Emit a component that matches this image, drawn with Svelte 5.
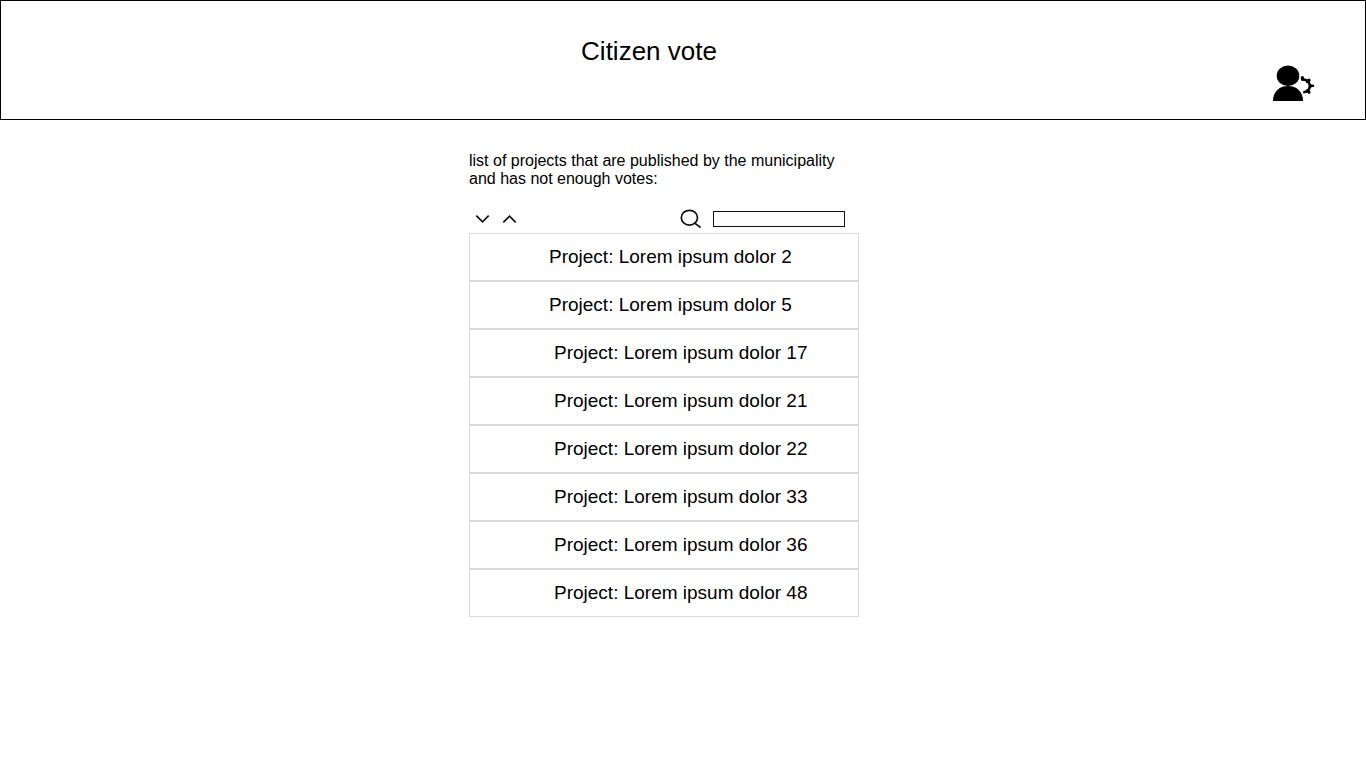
<script>
  const projects = [2, 5, 17, 21, 22, 33, 36, 48];
  let descending = $state(false);
  let query = $state('');

  const shown = $derived(
    projects
      .filter((n) => `project: lorem ipsum dolor ${n}`.includes(query.toLowerCase()))
      .sort((a, b) => (descending ? b - a : a - b))
  );
</script>

<header>
  <h1>Citizen vote</h1>
  <button class="account" aria-label="Account settings">
    <svg width="42" height="36" viewBox="0 0 42 36">
      <ellipse cx="15" cy="10.8" rx="11.3" ry="10.3" />
      <path d="M0 36C0 27 6 21 15 21S30 27 30 36Z" />
      <path d="M28.5 14.4C33.5 14.4 36.8 16.8 36.8 20.8S34 27.2 30.2 27.2" fill="none" stroke="#000" stroke-width="2.6" />
      <path d="M29.4 12.6V14M34.4 16.6L36 15.2M34.4 25.6L36 27.2" fill="none" stroke="#000" stroke-width="3.2" stroke-linecap="round" />
      <path d="M36.5 18.4L38.6 19.4L41.2 19.8V21.8L38.6 22.2L36.5 23.4Z" />
    </svg>
  </button>
</header>

<main>
  <section>
    <p>list of projects that are published by the municipality and has not enough votes:</p>
    <div class="tools">
      <button aria-label="Sort descending" onclick={() => (descending = true)}>
        <svg width="15" height="9" viewBox="0 0 15 9"><path d="M1.3 0.7L7.5 6.8L13.7 0.7" /></svg>
      </button>
      <button aria-label="Sort ascending" onclick={() => (descending = false)}>
        <svg width="15" height="9" viewBox="0 0 15 9"><path d="M1.3 7.3L7.5 1.2L13.7 7.3" /></svg>
      </button>
      <label for="search" aria-label="Search projects">
        <svg width="22" height="20" viewBox="0 0 22 20">
          <ellipse cx="10.4" cy="8.7" rx="8.1" ry="7.4" /><path d="M15.4 13.8L21.6 18.6" />
        </svg>
      </label>
      <input id="search" type="text" bind:value={query} />
    </div>
    <ul>
      {#each shown as n (n)}
        <li class:wide={n > 9}>Project: Lorem ipsum dolor {n}</li>
      {/each}
    </ul>
  </section>
</main>

<style>
  :global(body) {
    background: #fff;
    color: #000;
    font-family: "Liberation Sans", Arial, sans-serif;
  }
  header {
    box-sizing: border-box;
    min-height: 120px;
    border: 1px solid #000;
    display: grid;
    grid-template-columns: 100px 1fr 168px;
    padding-top: 35px;
  }
  h1 {
    grid-column: 2;
    margin: 0;
    text-align: center;
    font-size: 26px;
    line-height: 30px;
    font-weight: 400;
  }
  button {
    padding: 0;
    border: 0;
    background: none;
    display: flex;
    cursor: pointer;
  }
  .account {
    justify-self: end;
    align-self: start;
    margin: 29px 50px 0 0;
  }
  main {
    display: grid;
    grid-template-columns: 469fr 390px 507fr;
    padding-top: 32px;
  }
  section {
    grid-column: 2;
  }
  p {
    margin: 0;
    font-size: 16px;
    line-height: 18px;
  }
  .tools {
    display: flex;
    align-items: center;
    gap: 12px;
    height: 28px;
    padding: 17px 14px 0 6px;
  }
  .tools svg {
    display: block;
    fill: none;
    stroke: #111;
    stroke-width: 1.7;
  }
  label {
    margin-left: auto;
  }
  input {
    box-sizing: border-box;
    width: 132px;
    height: 16px;
    padding: 0 4px;
    border: 1px solid #111;
    background: #fff;
    font: 12px "Liberation Sans", Arial, sans-serif;
  }
  ul {
    margin: 0;
    padding: 0;
    list-style: none;
  }
  li {
    box-sizing: border-box;
    height: 48px;
    padding-left: 79px;
    border: 1px solid #d9d9d9;
    font-size: 19px;
    line-height: 46px;
    white-space: nowrap;
  }
  .wide {
    padding-left: 84px;
  }
</style>
